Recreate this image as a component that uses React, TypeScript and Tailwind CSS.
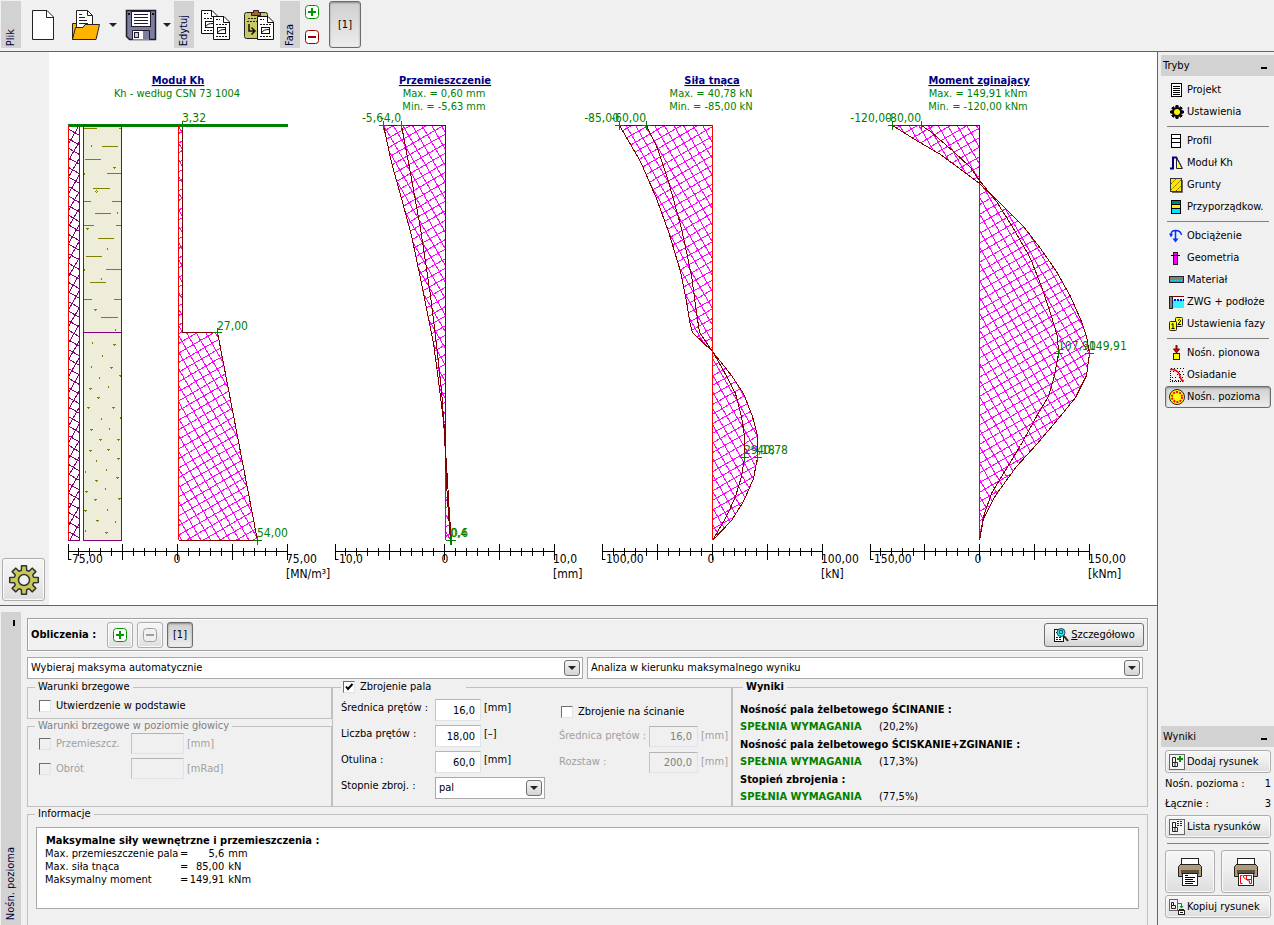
import type { ReactNode } from "react";

type Pt = [number, number];

/* ---------- chart data (drawing coordinates) ---------- */

const khUpper: Pt[] = [[178, 125], [182, 125], [182, 332], [178, 332]];
const khLower: Pt[] = [[178, 332], [217, 332], [257, 540], [178, 540]];

const dispOuter: Pt[] = [[383, 125], [391, 162], [401, 198], [411, 235], [420, 278], [433, 343], [438, 380], [443, 420], [445, 450], [447, 480], [449, 515], [451, 540]];
const dispInner: Pt[] = [[401, 125], [410, 173], [420, 228], [430, 295], [436, 344], [441, 390], [444, 430], [445, 460], [447, 500], [450, 540]];

const shearOuter: Pt[] = [[619, 125], [640, 161], [656, 198], [668, 231], [680, 271], [686, 301], [690, 325], [692, 332], [712, 351], [731, 375], [743, 393], [752, 416], [757, 435], [757, 457], [753, 478], [743, 501], [731, 520], [712, 540]];
const shearInner: Pt[] = [[646, 125], [657, 148], [668, 181], [681, 228], [691, 275], [695, 305], [699, 332], [712, 351], [723, 370], [735, 393], [741, 416], [744, 436], [744, 457], [741, 476], [735, 496], [726, 516], [712, 540]];

const momentOuter: Pt[] = [[892, 125], [916, 140], [940, 154], [963, 171], [979, 183], [1000, 203], [1023, 226], [1040, 248], [1056, 271], [1070, 296], [1081, 321], [1086, 336], [1089, 353], [1086, 375], [1075, 397], [1058, 418], [1036, 444], [1016, 466], [995, 495], [983, 518], [979, 540]];
const momentInner: Pt[] = [[921, 125], [930, 131], [953, 151], [970, 167], [979, 180], [996, 201], [1013, 228], [1030, 258], [1041, 286], [1051, 316], [1057, 336], [1058, 353], [1054, 375], [1048, 396], [1036, 416], [1020, 445], [1003, 473], [991, 493], [983, 516], [979, 540]];

const soilDashes: [number, number, number][] = [
  [84, 97, 128], [119, 121, 128], [102, 118, 146], [85, 101, 159], [107, 121, 173], [93, 110, 188],
  [84, 91, 201], [112, 121, 201], [95, 111, 213], [84, 94, 225], [116, 121, 225], [98, 114, 238],
  [86, 102, 256], [106, 121, 269], [90, 106, 282], [84, 92, 299], [114, 121, 299], [101, 118, 317],
];
const soilDots: Pt[] = [
  [91, 145], [107, 248], [101, 278], [115, 329], [117, 212], [84, 173], [84, 269],
  [92, 342], [102, 355], [91, 366], [99, 377], [108, 386], [101, 418], [120, 417], [109, 428],
  [96, 460], [106, 469], [85, 471], [105, 488], [107, 509], [115, 521], [85, 530],
];
const soilMarks: Pt[] = [
  [113, 167], [86, 228], [94, 309], [113, 344], [110, 367], [119, 375], [89, 388], [97, 397], [87, 407], [112, 407],
  [90, 429], [99, 439], [117, 439], [89, 450], [107, 449], [117, 458], [95, 480], [116, 477], [85, 491],
  [94, 499], [118, 498], [84, 510], [96, 520], [105, 532],
];

const toPoints = (pts: Pt[]) => pts.map((p) => p.join(",")).join(" ");

function hatchPath(pts: Pt[], mirror: boolean, step: number) {
  const xs = pts.map((p) => p[0]);
  const ys = pts.map((p) => p[1]);
  const cx = (Math.min(...xs) + Math.max(...xs)) / 2;
  const cy = (Math.min(...ys) + Math.max(...ys)) / 2;
  const r = Math.hypot(Math.max(...xs) - cx, Math.max(...ys) - cy);
  const m = mirror ? -1 : 1;
  const dirs: Pt[] = [[0.5 * m, 0.866], [0.866 * m, -0.5]];
  let d = "";
  for (const [dx, dy] of dirs) {
    for (let k = -Math.ceil(r / step); k <= Math.ceil(r / step); k++) {
      const ox = cx - dy * k * step;
      const oy = cy + dx * k * step;
      d += `M${(ox - dx * r).toFixed(1)} ${(oy - dy * r).toFixed(1)}L${(ox + dx * r).toFixed(1)} ${(oy + dy * r).toFixed(1)}`;
    }
  }
  return d;
}

function Hatch({ id, pts, color = "#ff00ff", mirror = false, step = 8.3 }: { id: string; pts: Pt[]; color?: string; mirror?: boolean; step?: number }) {
  return (
    <>
      <clipPath id={id}>
        <polygon points={toPoints(pts)} />
      </clipPath>
      <path d={hatchPath(pts, mirror, step)} clipPath={`url(#${id})`} stroke={color} fill="none" shapeRendering="crispEdges" />
    </>
  );
}

function Axis({ x, w, zero, min, max, unit }: { x: number; w: number; zero: number; min: string; max: string; unit: string }) {
  let d = `M${x} 551.5H${x + w}`;
  for (let i = 0; i <= 20; i++) {
    const tx = Math.floor(x + (w * i) / 20) + 0.5;
    d += i % 5 === 0 ? `M${tx} 544V560` : `M${tx} 548V556`;
  }
  return (
    <>
      <path d={d} stroke="#000" fill="none" shapeRendering="crispEdges" />
      <g fontSize="12" fill="#000">
        <text x={x} y="563">{min}</text>
        <text x={zero} y="563" textAnchor="middle">0</text>
        <text x={x + w - 1} y="563">{max}</text>
        <text x={x + w - 1} y="578">{unit}</text>
      </g>
    </>
  );
}

function Heading({ x, title, lines }: { x: number; title: string; lines: string[] }) {
  return (
    <g fontSize="11" textAnchor="middle">
      <text x={x} y="84" fontWeight="700" fill="#000080" textDecoration="underline">{title}</text>
      {lines.map((l, i) => (
        <text key={l} x={x - 1} y={97 + i * 13} fill="#008000">{l}</text>
      ))}
    </g>
  );
}

function Value({ x, y, text, end = false, cross }: { x: number; y: number; text: string; end?: boolean; cross: Pt }) {
  return (
    <>
      <path d={`M${cross[0] - 4} ${cross[1] + 0.5}h9M${cross[0] + 0.5} ${cross[1] - 4}v9`} stroke="#008000" shapeRendering="crispEdges" />
      <text x={x} y={y} fontSize="12" fill="#008000" textAnchor={end ? "end" : "start"}>{text}</text>
    </>
  );
}

function Curve({ pts }: { pts: Pt[] }) {
  return <polyline points={toPoints(pts)} transform="translate(.5 .5)" fill="none" stroke="#800000" shapeRendering="crispEdges" />;
}

function Charts() {
  return (
    <svg viewBox="49 52 1108 553" className="block h-full w-full font-['DejaVu_Sans_Condensed','DejaVu_Sans',sans-serif]" role="img" aria-label="Wykresy sił wewnętrznych i przemieszczeń">
      {/* stiffness modulus */}
      <rect x="83.5" y="125.5" width="38" height="415" fill="#eeedd9" />
      <g stroke="#808000" shapeRendering="crispEdges" fill="none">
        {soilDashes.map(([a, b, y], i) => <path key={i} d={`M${a} ${y + 0.5}H${b}`} />)}
        {soilDots.map(([x, y], i) => <path key={i} d={`M${x + 0.5} ${y}v2`} />)}
        {soilMarks.map(([x, y], i) => <path key={i} d={`M${x} ${y + 0.5}h3M${x + 1.5} ${y}v2`} />)}
        <path d="M96.5 190v1M95 191.5h1M98 191.5h-1M96.5 192v1" />
      </g>
      <Hatch id="pile" pts={[[69, 127], [79, 127], [79, 540], [69, 540]]} color="#800080" mirror />
      <path d="M79.5 126V540.5H68" stroke="#800080" fill="none" shapeRendering="crispEdges" />
      <Hatch id="khu" pts={khUpper} />
      <Hatch id="khl" pts={khLower} />
      <path d="M68 125.5H288" stroke="#008000" strokeWidth="3" shapeRendering="crispEdges" />
      <path d="M83.5 125.5H121.5V540.5H83.5ZM83.5 332.5H121.5" stroke="#800080" fill="none" shapeRendering="crispEdges" />
      <Curve pts={[[182, 125], [182, 332], [217, 332], [257, 540], [178, 540]]} />
      <path d="M68.5 125V540M178.5 125V540" stroke="#ff0000" shapeRendering="crispEdges" />
      <Heading x={178} title="Moduł Kh" lines={["Kh - według CSN 73 1004"]} />
      <Value x={182} y={122} text="3,32" cross={[182, 125]} />
      <Value x={217} y={330} text="27,00" cross={[217, 332]} />
      <Value x={257} y={537} text="54,00" cross={[257, 540]} />
      <Axis x={68} w={219} zero={177} min="-75,00" max="75,00" unit="[MN/m³]" />

      {/* displacement */}
      <Hatch id="disp" pts={[[445, 125], ...dispOuter, [445, 540]]} />
      <path d="M445.5 125V540" stroke="#ff0000" shapeRendering="crispEdges" />
      <Curve pts={[[445, 450], [445, 125], ...dispOuter, [445, 540]]} />
      <Curve pts={dispInner} />
      <Heading x={445} title="Przemieszczenie" lines={["Max. = 0,60 mm", "Min. = -5,63 mm"]} />
      <Value x={383} y={122} text="-5,6" end cross={[383, 125]} />
      <Value x={401} y={122} text="-4,0" end cross={[401, 125]} />
      <Value x={450} y={537} text="0,4" cross={[450, 540]} />
      <Value x={451} y={537} text="0,6" cross={[451, 540]} />
      <Axis x={335} w={219} zero={445} min="-10,0" max="10,0" unit="[mm]" />

      {/* shear force */}
      <Hatch id="shear" pts={[[712, 125], ...shearOuter]} />
      <Curve pts={[[712, 125], ...shearOuter]} />
      <Curve pts={shearInner} />
      <path d="M712.5 125V540" stroke="#ff0000" shapeRendering="crispEdges" />
      <Heading x={712} title="Siła tnąca" lines={["Max. = 40,78 kN", "Min. = -85,00 kN"]} />
      <Value x={619} y={122} text="-85,00" end cross={[619, 125]} />
      <Value x={646} y={122} text="-60,00" end cross={[646, 125]} />
      <Value x={744} y={454} text="29,18" cross={[744, 457]} />
      <Value x={757} y={454} text="40,78" cross={[757, 457]} />
      <Axis x={602} w={220} zero={711} min="-100,00" max="100,00" unit="[kN]" />

      {/* bending moment */}
      <Hatch id="moment" pts={[[979, 125], ...momentOuter]} />
      <path d="M979.5 125V540" stroke="#ff0000" shapeRendering="crispEdges" />
      <Curve pts={[[979, 183], [979, 125], ...momentOuter]} />
      <Curve pts={momentInner} />
      <Heading x={979} title="Moment zginający" lines={["Max. = 149,91 kNm", "Min. = -120,00 kNm"]} />
      <Value x={892} y={122} text="-120,00" end cross={[892, 125]} />
      <Value x={921} y={122} text="-80,00" end cross={[921, 125]} />
      <Value x={1058} y={350} text="107,90" cross={[1058, 353]} />
      <Value x={1089} y={350} text="149,91" cross={[1089, 353]} />
      <Axis x={870} w={219} zero={978} min="-150,00" max="150,00" unit="[kNm]" />
    </svg>
  );
}

/* ---------- icons ---------- */

function Svg({ w, h, label, children }: { w: number; h: number; label?: string; children: ReactNode }) {
  return (
    <svg width={w} height={h} viewBox={`0 0 ${w} ${h}`} className="block shrink-0" role={label ? "img" : undefined} aria-label={label} aria-hidden={label ? undefined : true}>
      {children}
    </svg>
  );
}

function gearPoints(c: number, outer: number, inner: number) {
  const out: string[] = [];
  for (let i = 0; i < 8; i++) {
    const a = (i * Math.PI) / 4;
    for (const [off, r] of [[-0.27, inner], [-0.17, outer], [0.17, outer], [0.27, inner]]) {
      out.push(`${(c + r * Math.sin(a + off)).toFixed(2)},${(c - r * Math.cos(a + off)).toFixed(2)}`);
    }
  }
  return out.join(" ");
}

const BigGear = () => (
  <Svg w={32} h={32}>
    <polygon points={gearPoints(16, 14.5, 10)} fill="#c8c85a" stroke="#333" strokeWidth="1.5" strokeLinejoin="round" />
    <circle cx="16" cy="16" r="5.5" fill="#f0f0f0" stroke="#333" strokeWidth="1.5" />
  </Svg>
);

const NewIcon = () => (
  <Svg w={24} h={32}>
    <path d="M1.5 1.5H16L22.5 8V30.5H1.5Z" fill="#fff" stroke="#222" />
    <path d="M15.5 1.5V8.5H22.5" fill="none" stroke="#222" />
  </Svg>
);

const OpenIcon = () => (
  <Svg w={30} h={32}>
    <path d="M1.5 30V14.5H7L9 17H24.5V30Z" fill="#ffb400" stroke="#222" />
    <path d="M5.5 20V1.5H16.5L21.5 6.5V20Z" fill="#fff" stroke="#222" />
    <path d="M16.5 1.5V6.5H21.5" fill="none" stroke="#222" />
    <path d="M8 5.500h3M8 8.500h6M8 11.500h8M8 14.500h9" stroke="#222" shapeRendering="crispEdges" />
    <path d="M4.5 18.5H12L14 15.5H28.5L25 30.5H1.5Z" fill="#ffb400" stroke="#222" />
  </Svg>
);

const SaveIcon = () => (
  <Svg w={32} h={32}>
    <path d="M1.5 1.5H30.5V30.5H4.5L1.5 27.5Z" fill="#7d7d9e" stroke="#1c1c2c" strokeWidth="1.5" />
    <rect x="6.5" y="2.5" width="19" height="15" fill="#fff" stroke="#1c1c2c" />
    <path d="M9 5.500h14M9 8.500h14M9 11.500h14M9 14.500h14" stroke="#1c1c2c" shapeRendering="crispEdges" />
    <rect x="3" y="4" width="2" height="2" fill="#111" />
    <rect x="27" y="4" width="2" height="2" fill="#111" />
    <path d="M7.500 30.500V21.500H24.500V30.500" fill="#fff" stroke="#1c1c2c" />
    <rect x="9.500" y="23.500" width="4" height="5" fill="#cfcfe4" stroke="#1c1c2c" />
    <rect x="18" y="22" width="6" height="8" fill="#7d7d9e" />
  </Svg>
);

const sheet = (x: number, y: number) => (
  <g transform={`translate(${x} ${y})`}>
    <path d="M.5.5H11L16.500 6V23.500H.5Z" fill="#fff" stroke="#111" />
    <path d="M10.500.5V6.500H16.500" fill="none" stroke="#111" />
    <path d="M3 3.500h4M3 8.500h11M3 20.500h11" stroke="#111" strokeDasharray="2 1" shapeRendering="crispEdges" />
    <rect x="4.500" y="11.500" width="8" height="6" fill="#fff" stroke="#111" />
    <path d="M5 16.500Q6 13.500 12 13.500" fill="none" stroke="#111" />
  </g>
);

const CopyIcon = () => (
  <Svg w={31} h={32}>
    {sheet(1, 1)}
    {sheet(13, 7)}
  </Svg>
);

const PasteIcon = () => (
  <Svg w={31} h={32}>
    <rect x="1.500" y="3.500" width="23" height="26" rx="2" fill="#c8c864" stroke="#222" />
    <path d="M8.500 6.500V3.500H10.500V1.500H15.500V3.500H17.500V6.500Z" fill="#a0662c" stroke="#222" />
    <path d="M5 9.500h15M4 12.500h10" stroke="#222" strokeDasharray="2 1" shapeRendering="crispEdges" />
    <path d="M6 15V22H11M8.500 18.500L12 22L8.500 25.500" fill="none" stroke="#111" strokeWidth="1.5" />
    {sheet(14, 7)}
  </Svg>
);

const PlusIcon = ({ label }: { label?: string }) => (
  <Svg w={14} h={14} label={label}>
    <rect x=".5" y=".5" width="13" height="13" rx="3" fill="#fff" stroke="#009600" />
    <path d="M3 7H11M7 3V11" stroke="#009600" strokeWidth="2" />
  </Svg>
);

const MinusIcon = ({ muted = false }: { muted?: boolean }) => (
  <Svg w={14} h={14}>
    <rect x=".5" y=".5" width="13" height="13" rx="3" fill={muted ? "#f0f0f0" : "#fff"} stroke={muted ? "#a0a0a0" : "#960000"} />
    <path d="M3 7H11" stroke={muted ? "#a0a0a0" : "#960000"} strokeWidth="2" />
  </Svg>
);

const Caret = () => (
  <Svg w={8} h={4}>
    <path d="M0 0H8L4 4Z" fill="#222" />
  </Svg>
);

const ico = {
  projekt: (
    <Svg w={16} h={16}>
      <rect x="2.500" y="1.500" width="10" height="13" fill="#fff" stroke="#000" />
      <path d="M4 4.500h7M4 6.500h7M4 8.500h7M4 10.500h7M4 12.500h7" stroke="#000" shapeRendering="crispEdges" />
    </Svg>
  ),
  ustawienia: (
    <Svg w={16} h={16}>
      <polygon points={gearPoints(8, 6.5, 4.5)} fill="#000" stroke="#000" />
      <circle cx="8" cy="8" r="3" fill="#ffee00" />
    </Svg>
  ),
  profil: (
    <Svg w={16} h={16}>
      <rect x="2.500" y="1.500" width="9" height="13" fill="#fff" stroke="#000" />
      <path d="M3 5.500h8M3 9.500h8" stroke="#000" shapeRendering="crispEdges" />
    </Svg>
  ),
  modul: (
    <Svg w={16} h={16}>
      <path d="M1 13.500H4V2.500H8" fill="none" stroke="#000080" strokeWidth="2" />
      <path d="M7.500 3V13.500H13.500Z" fill="#ffff40" stroke="#222" />
      <path d="M8 2.500L13 13" stroke="#0000c0" fill="none" strokeDasharray="2 1" />
    </Svg>
  ),
  grunty: (
    <Svg w={16} h={16}>
      <path d="M3 15.500H13.500V3" stroke="#666" fill="none" />
      <rect x="1.500" y="1.500" width="11" height="13" fill="#ffe600" stroke="#333" />
      <path d="M2 7L7 2M2 13L12 3M7 14L12 9" stroke="#6b6000" strokeDasharray="2 1" />
    </Svg>
  ),
  przyp: (
    <Svg w={16} h={16}>
      <rect x="2.500" y="1.500" width="9" height="13" fill="#ffee00" stroke="#000" />
      <rect x="3" y="2" width="8" height="3" fill="#008080" />
      <rect x="3" y="10" width="8" height="4" fill="#00e5ff" />
      <path d="M3 5.500h8M3 9.500h8" stroke="#000" />
    </Svg>
  ),
  obc: (
    <Svg w={16} h={16}>
      <path d="M2 8C1.500 4 3.500 2.500 6.500 2.500S12 4 12.500 7M6.500 2.500V12" fill="none" stroke="#0033ff" strokeWidth="1.5" />
      <path d="M0 5.500L4 6L2 9.500ZM3.500 10.500H9.500L6.500 14.500Z" fill="#0033ff" />
    </Svg>
  ),
  geo: (
    <Svg w={16} h={16}>
      <rect x="4.500" y="2.500" width="4" height="12" fill="#ff00ff" stroke="#222" />
      <path d="M2 5.500H11" stroke="#000" />
    </Svg>
  ),
  mat: (
    <Svg w={16} h={16}>
      <rect x=".5" y="4.500" width="14" height="6" fill="#808080" stroke="#222" />
      <path d="M2 8.500h12" stroke="#00e5ff" strokeDasharray="2 1" shapeRendering="crispEdges" />
    </Svg>
  ),
  zwg: (
    <Svg w={16} h={16}>
      <rect x="4" y="3" width="11" height="3" fill="#fff" />
      <rect x="4" y="6" width="11" height="8" fill="#30f4ff" />
      <rect x=".5" y="2.500" width="3" height="12" fill="#808080" stroke="#222" />
      <path d="M4 2.500h11" stroke="#800000" />
      <path d="M5 6h10" stroke="#0000ff" strokeWidth="2" strokeDasharray="2 1" />
    </Svg>
  ),
  fazy: (
    <Svg w={16} h={16}>
      <rect x="6.500" y="1.500" width="7" height="9" rx="1" fill="#ffff00" stroke="#222" />
      <rect x=".5" y="5.500" width="7" height="9" rx="1" fill="#ffff00" stroke="#222" />
      <path d="M2.500 8.500L4 7.500V12.500M2.500 12.500h3M9 4.500Q10.500 2.500 11.500 4.500Q11.500 5.500 9 8.500H12" fill="none" stroke="#000" />
    </Svg>
  ),
  pion: (
    <Svg w={16} h={16}>
      <rect x="4.500" y="8.500" width="6" height="6" fill="#ffff00" stroke="#222" />
      <path d="M7.500 0V5" stroke="#a00000" strokeWidth="2" />
      <path d="M4.500 4H10.500L7.500 8Z" fill="#e00000" stroke="#700000" />
    </Svg>
  ),
  osiad: (
    <Svg w={16} h={16}>
      <path d="M2 1.500h13M4 4.500h11M8 7.500h7M10 10.500h5M3 10.500h4M3 13.500h9" stroke="#000" strokeDasharray="1 2" shapeRendering="crispEdges" />
      <path d="M1.500 2V14.500H15" fill="none" stroke="#000" strokeDasharray="1 1" shapeRendering="crispEdges" />
      <path d="M1 2.500H4Q10 4 11 9T15 14" fill="none" stroke="#ff0000" strokeWidth="1.5" />
    </Svg>
  ),
  poz: (
    <Svg w={16} h={16}>
      <circle cx="8" cy="8" r="7.500" fill="#ffff00" stroke="#222" />
      <circle cx="8" cy="8" r="5" fill="none" stroke="#ff0000" strokeWidth="2" strokeDasharray="2 1.140" />
    </Svg>
  ),
};

const docLetter = (
  <path d="M3.500 12.500V3.500H6.500V8M3.500 8.500H8.500V12.500H3.500M6 8.500V12.500" fill="none" stroke="#222" />
);
const AddDrawingIcon = () => (
  <Svg w={16} h={16}>
    <rect x=".5" y=".5" width="15" height="15" fill="#f4f4f4" stroke="#666" />
    {docLetter}
    <path d="M8 5H14M11 2V8" stroke="#009600" strokeWidth="2" />
  </Svg>
);
const ListDrawingIcon = () => (
  <Svg w={16} h={16}>
    <rect x=".5" y=".5" width="15" height="15" fill="#f4f4f4" stroke="#666" />
    {docLetter}
    <path d="M8 2.500h6M8 4.500h6M8 6.500h6" stroke="#222" strokeDasharray="2 1" shapeRendering="crispEdges" />
  </Svg>
);
const CopyDrawingIcon = () => (
  <Svg w={16} h={16}>
    <rect x=".5" y=".5" width="8" height="11" fill="#f4f4f4" stroke="#666" />
    <path d="M2.500 9.500V3.500H4.500V6M2.500 6.500H6.500V9.500H2.500" fill="none" stroke="#222" />
    <path d="M9 4.500H12.500V8M11 7L12.500 9L14 7" fill="none" stroke="#009600" />
    <rect x="9.500" y="11.500" width="6" height="4" fill="#fff" stroke="#222" />
    <path d="M10 10.500h5M11 13.500h3" stroke="#222" />
  </Svg>
);
const PrinterIcon = ({ red = false }: { red?: boolean }) => (
  <Svg w={24} h={30}>
    <path d="M.500 9.500L3.500 6.500H20.500L23.500 9.500V19.500H.500Z" fill="#b09a78" stroke="#222" />
    <rect x="3.500" y="1.500" width="17" height="6" fill="#fff" stroke="#222" />
    <rect x="3" y="13" width="18" height="4" fill="#5a5044" />
    <rect x="4.500" y="16.500" width="15" height="12" fill="#fff" stroke="#222" />
    {red ? (
      <path d="M8.500 18.500H6.500V26.500H8.500M9.500 18.500H17.500V26.500H15.500V23.500M9.500 18.500V20.500L12.500 22.500H17.500M12.500 18.500V22.500L15.500 24.500" fill="none" stroke="#ff0000" />
    ) : (
      <path d="M7 18.500h3M7 20.500h10M7 22.500h8M7 24.500h10M7 26.500h8" stroke="#000" shapeRendering="crispEdges" />
    )}
  </Svg>
);
const DetailIcon = () => (
  <Svg w={16} h={16}>
    <rect x="1.500" y="2.500" width="9" height="12" fill="#fff" stroke="#111" />
    <path d="M3 10.500h5M3 12.500h6M3 5.500h2" stroke="#111" strokeDasharray="2 1" />
    <circle cx="8" cy="5.500" r="4" fill="#30e8f4" stroke="#244" />
    <path d="M6.500 3.500h3v3h-3z" fill="none" stroke="#066" />
    <path d="M11 9L15 14" stroke="#222" strokeWidth="2" />
  </Svg>
);

/* ---------- controls ---------- */

const btn = "border border-[#adadad] rounded-[3px] bg-linear-to-b from-[#f6f6f6] via-[#ededed] via-50% to-[#dddddd] shadow-[inset_0_0_0_1px_#fafafa]";
const pressed = "border border-[#6c6c6c] rounded-[3px] bg-linear-to-b from-[#cfcfcf] to-[#ededed] shadow-[inset_0_1px_2px_#8a8a8a]";

function Grip({ children }: { children: ReactNode }) {
  return (
    <div className="flex w-5 items-end justify-center bg-[#d2d2d2] pb-[2px] text-[#00003c]">
      <span className="rotate-180 [writing-mode:vertical-rl]">{children}</span>
    </div>
  );
}

function Select({ label, options }: { label: string; options: string[] }) {
  return (
    <span className="relative block h-[22px]">
      <select aria-label={label} className="block h-full w-full appearance-none border border-[#a9a9a9] bg-white pr-5 pl-[3px] outline-none">
        {options.map((o) => <option key={o}>{o}</option>)}
      </select>
      <span className="pointer-events-none absolute top-[3px] right-[3px] flex h-4 w-4 items-center justify-center rounded-[3px] border border-[#707070] bg-linear-to-b from-[#f4f4f4] to-[#d4d4d4]">
        <Caret />
      </span>
    </span>
  );
}

function Check({ label, checked = false, disabled = false }: { label: string; checked?: boolean; disabled?: boolean }) {
  return (
    <label className={disabled ? "flex items-center gap-[5px] text-[#a0a0a0]" : "flex items-center gap-[5px]"}>
      <span className="relative block h-3 w-3">
        <input
          type="checkbox"
          defaultChecked={checked}
          disabled={disabled}
          className="peer block h-3 w-3 appearance-none border border-t-[#6e6e6e] border-r-[#e4e4e4] border-b-[#e4e4e4] border-l-[#6e6e6e] bg-white disabled:bg-[#f0f0f0]"
        />
        <svg viewBox="0 0 12 12" className="pointer-events-none absolute inset-0 hidden peer-checked:block" aria-hidden="true">
          <path d="M3 5.500L5 8L9.500 3" fill="none" stroke="#000" strokeWidth="2" />
        </svg>
      </span>
      {label}
    </label>
  );
}

const field = "block h-[22px] border border-t-[#b4b4b4] border-l-[#c4c4c4] border-[#dfe3ea] bg-white pr-[5px] text-right outline-none disabled:h-[21px] disabled:bg-[#f0f0f0] disabled:text-[#808080]";

function NumberRow({ id, label, value, unit }: { id: string; label: string; value: string; unit: string }) {
  return (
    <div className="flex items-start leading-[18px]">
      <label htmlFor={id} className="w-[94px]">{label}</label>
      <input id={id} defaultValue={value} className={`${field} w-[46px]`} />
      <span className="ml-[3px]">{unit}</span>
    </div>
  );
}

function DisabledRow({ id, label, value, unit }: { id: string; label: string; value: string; unit: string }) {
  return (
    <div className="flex h-[22px] items-center text-[#a0a0a0]">
      <label htmlFor={id} className="w-[90px]">{label}</label>
      <input id={id} defaultValue={value} disabled className={`${field} w-[49px]`} />
      <span className="ml-[3px]">{unit}</span>
    </div>
  );
}

const group = "min-w-0 border border-[#c0c0c0]";
const legend = "h-[14px] px-[3px]";

function Result({ title, value }: { title: string; value: string }) {
  return (
    <>
      <h3 className="h-[17px] leading-[17px] font-bold">{title}</h3>
      <p className="flex h-[18px] leading-[18px]">
        <strong className="w-[139px] text-[#008000]">SPEŁNIA WYMAGANIA</strong>
        {value}
      </p>
    </>
  );
}

const modes = [
  [["Projekt", ico.projekt], ["Ustawienia", ico.ustawienia]],
  [["Profil", ico.profil], ["Moduł Kh", ico.modul], ["Grunty", ico.grunty], ["Przyporządkow.", ico.przyp]],
  [["Obciążenie", ico.obc], ["Geometria", ico.geo], ["Materiał", ico.mat], ["ZWG + podłoże", ico.zwg], ["Ustawienia fazy", ico.fazy]],
  [["Nośn. pionowa", ico.pion], ["Osiadanie", ico.osiad], ["Nośn. pozioma", ico.poz]],
] as [string, ReactNode][][];

function PaneTitle({ children }: { children: ReactNode }) {
  return (
    <div className="flex h-[21px] items-center justify-between bg-[#d2d2d2] pr-[5px] pl-[2px]">
      <h2>{children}</h2>
      <button type="button" aria-label="Zwiń" className="flex h-3 w-2 items-end pb-[3px]">
        <span className="h-[2px] w-[6px] bg-black" />
      </button>
    </div>
  );
}

const info = [
  ["Max. przemieszczenie pala", "5,6", "mm"],
  ["Max. siła tnąca", "85,00", "kN"],
  ["Maksymalny moment", "149,91", "kNm"],
];

export default function App() {
  return (
    <div className="flex min-h-screen flex-col bg-[#f0f0f0] font-['DejaVu_Sans_Condensed','DejaVu_Sans',sans-serif] text-[11px] leading-[14px] whitespace-nowrap text-black">
      <header className="flex h-[52px] border-b border-[#646464] pt-px pb-[3px] pl-px">
        <Grip>Plik</Grip>
        <div className="flex items-center gap-4 px-[10px]">
          <button type="button" aria-label="Nowy"><NewIcon /></button>
          <button type="button" aria-label="Otwórz" className="flex items-center gap-2"><OpenIcon /><Caret /></button>
          <button type="button" aria-label="Zapisz" className="-ml-2 flex items-center gap-[6px]"><SaveIcon /><Caret /></button>
        </div>
        <div className="-ml-[7px] flex"><Grip>Edytuj</Grip></div>
        <div className="flex items-center gap-3 px-[6px]">
          <button type="button" aria-label="Kopiuj"><CopyIcon /></button>
          <button type="button" aria-label="Wklej"><PasteIcon /></button>
        </div>
        <Grip>Faza</Grip>
        <div className="flex flex-col justify-between px-[5px] pt-1 pb-1">
          <button type="button" aria-label="Dodaj fazę"><PlusIcon /></button>
          <button type="button" aria-label="Usuń fazę"><MinusIcon /></button>
        </div>
        <button type="button" className={`ml-[5px] w-8 ${pressed}`}>[1]</button>
      </header>

      <div className="flex flex-1">
        <main className="flex min-w-0 flex-1 flex-col">
          <section className="flex min-h-[554px] flex-1 border-b border-[#646464]">
            <div className="flex w-[49px] flex-col justify-end pb-1 pl-[2px]">
              <button type="button" aria-label="Ustawienia rysunku" className={`flex h-[43px] w-[43px] items-center justify-center ${btn}`}>
                <BigGear />
              </button>
            </div>
            <div className="min-w-0 flex-1 bg-white">
              <Charts />
            </div>
          </section>

          <section className="flex pl-px">
            <div className="mt-[6px] flex w-5 flex-col items-center justify-between bg-[#d2d2d2] pt-2 pb-[6px] text-[#00003c]">
              <span className="ml-[5px] h-[6px] w-[2px] bg-black" />
              <span className="rotate-180 [writing-mode:vertical-rl]">Nośn. pozioma</span>
            </div>

            <div className="min-w-0 flex-1 pt-3 pr-[9px] pl-[6px]">
              <div className="flex h-[33px] items-center border border-[#a0a0a0] pr-[3px] pl-[3px] shadow-[inset_1px_1px_0_#fff,1px_1px_0_#fff]">
                <h2 className="w-[76px] font-bold">Obliczenia :</h2>
                <div className="flex gap-[4px]">
                  <button type="button" aria-label="Dodaj obliczenie" className={`flex h-[26px] w-[26px] items-center justify-center ${btn}`}><PlusIcon /></button>
                  <button type="button" aria-label="Usuń obliczenie" disabled className={`flex h-[26px] w-[26px] items-center justify-center ${btn}`}><MinusIcon muted /></button>
                  <button type="button" className={`h-[26px] w-[26px] ${pressed}`}>[1]</button>
                </div>
                <button type="button" className="ml-auto flex h-6 w-[100px] items-center justify-center gap-[2px] rounded-[3px] border border-[#707070] bg-linear-to-b from-[#f4f4f4] via-[#ebebeb] to-[#d4d4d4]">
                  <DetailIcon />
                  <span><u>S</u>zczegółowo</span>
                </button>
              </div>

              <div className="mt-[6px] grid grid-cols-2 gap-1 pr-[5px]">
                <Select label="Wybór maksymów" options={["Wybieraj maksyma automatycznie"]} />
                <Select label="Kierunek analizy" options={["Analiza w kierunku maksymalnego wyniku"]} />
              </div>

              <div className="mt-px grid grid-cols-[305fr_400fr_416fr]">
                <div className="flex flex-col">
                  <fieldset className={`${group} px-[7px]`}>
                    <legend className={legend}>Warunki brzegowe</legend>
                    <div className="flex h-6 items-center pl-1">
                      <Check label="Utwierdzenie w podstawie" />
                    </div>
                  </fieldset>
                  <fieldset className={`${group} flex-1 px-[7px]`}>
                    <legend className={`${legend} text-[#808080]`}>Warunki brzegowe w poziomie głowicy</legend>
                    <div className="grid grid-cols-[92px_53px_auto] items-center gap-y-1 pl-1 text-[#a0a0a0]">
                      <Check label="Przemieszcz." disabled />
                      <input aria-label="Przemieszczenie" disabled className={`${field} w-full`} />
                      <span className="ml-[3px]">[mm]</span>
                      <Check label="Obrót" disabled />
                      <input aria-label="Obrót" disabled className={`${field} w-full`} />
                      <span className="ml-[3px]">[mRad]</span>
                    </div>
                  </fieldset>
                </div>

                <fieldset className={`${group} px-2 pb-[7px]`}>
                  <legend className="h-[14px] w-[125px] pl-[2px]">
                    <Check label="Zbrojenie pala" checked />
                  </legend>
                  <div className="grid grid-cols-[218px_auto] pt-[5px]">
                    <div className="flex flex-col gap-1">
                      <NumberRow id="dia" label="Średnica prętów :" value="16,0" unit="[mm]" />
                      <NumberRow id="cnt" label="Liczba prętów :" value="18,00" unit="[–]" />
                      <NumberRow id="cov" label="Otulina :" value="60,0" unit="[mm]" />
                      <div className="flex items-start">
                        <span className="w-[94px] leading-[18px]">Stopnie zbroj. :</span>
                        <div className="w-[110px]">
                          <Select label="Stopnie zbroj." options={["pal"]} />
                        </div>
                      </div>
                    </div>
                    <div>
                      <div className="flex h-[26px] items-center pl-[2px]">
                        <Check label="Zbrojenie na ścinanie" />
                      </div>
                      <div className="flex flex-col gap-1">
                        <DisabledRow id="sdia" label="Średnica prętów :" value="16,0" unit="[mm]" />
                        <DisabledRow id="ssp" label="Rozstaw :" value="200,0" unit="[mm]" />
                      </div>
                    </div>
                  </div>
                </fieldset>

                <fieldset className={`${group} px-[7px]`}>
                  <legend className={`${legend} ml-[3px] font-bold`}>Wyniki</legend>
                  <div className="pt-[7px]">
                    <Result title="Nośność pala żelbetowego ŚCINANIE :" value="(20,2%)" />
                    <Result title="Nośność pala żelbetowego ŚCISKANIE+ZGINANIE :" value="(17,3%)" />
                    <Result title="Stopień zbrojenia :" value="(77,5%)" />
                  </div>
                </fieldset>
              </div>

              <fieldset className={`${group} border-b-0 px-2 pb-2`}>
                <legend className={`${legend} -ml-px`}>Informacje</legend>
                <div className="mt-[6px] mb-[9px] h-[82px] border border-[#a9a9a9] bg-white px-2 pt-[6px]">
                  <table className="leading-[13px]">
                    <caption className="pl-px text-left font-bold">Maksymalne siły wewnętrzne i przemieszczenia :</caption>
                    <tbody>
                      {info.map(([n, v, u]) => (
                        <tr key={n}>
                          <th scope="row" className="w-[135px] p-0 text-left font-normal">{n}</th>
                          <td className="w-2 p-0">=</td>
                          <td className="w-9 p-0 text-right">{v}</td>
                          <td className="p-0 pl-1">{u}</td>
                        </tr>
                      ))}
                    </tbody>
                  </table>
                </div>
              </fieldset>
            </div>
          </section>
        </main>

        <aside className="flex w-[117px] flex-col border-l border-[#646464] pt-[3px] pb-2 pl-[3px]">
          <PaneTitle>Tryby</PaneTitle>
          <nav className="mt-[3px] flex flex-col pr-[3px] pl-1">
            {modes.map((g, i) => (
              <div key={i}>
                {i > 0 && <hr className="mx-[2px] my-[3px] border-[#808080]" />}
                {g.map(([name, icon]) => (
                  <button
                    key={name}
                    type="button"
                    className={name === "Nośn. pozioma" ? `flex h-[22px] w-full items-center gap-[2px] pl-[3px] ${pressed}` : "flex h-[22px] w-full items-center gap-[2px] pl-1"}
                  >
                    {icon}
                    {name}
                  </button>
                ))}
              </div>
            ))}
          </nav>

          <div className="mt-auto">
            <PaneTitle>Wyniki</PaneTitle>
            <div className="flex flex-col pt-[3px] pr-[3px] pl-1">
              <button type="button" className={`flex h-[23px] items-center gap-[2px] pl-[3px] ${btn}`}><AddDrawingIcon />Dodaj rysunek</button>
              <dl className="mt-px grid grid-cols-[auto_auto] justify-between leading-[20px]">
                <dt>Nośn. pozioma :</dt>
                <dd>1</dd>
                <dt>Łącznie :</dt>
                <dd>3</dd>
              </dl>
              <button type="button" className={`mt-px flex h-[23px] items-center gap-[2px] pl-[3px] ${btn}`}><ListDrawingIcon />Lista rysunków</button>
              <hr className="mx-[2px] mt-[5px] mb-[6px] border-[#808080]" />
              <div className="grid grid-cols-2 gap-[6px]">
                <button type="button" aria-label="Drukuj" className={`flex h-[43px] items-center justify-center ${btn}`}><PrinterIcon /></button>
                <button type="button" aria-label="Drukuj rysunek" className={`flex h-[43px] items-center justify-center ${btn}`}><PrinterIcon red /></button>
              </div>
              <button type="button" className={`mt-[2px] flex h-[23px] items-center gap-[2px] pl-[3px] ${btn}`}><CopyDrawingIcon />Kopiuj rysunek</button>
            </div>
          </div>
        </aside>
      </div>
    </div>
  );
}
